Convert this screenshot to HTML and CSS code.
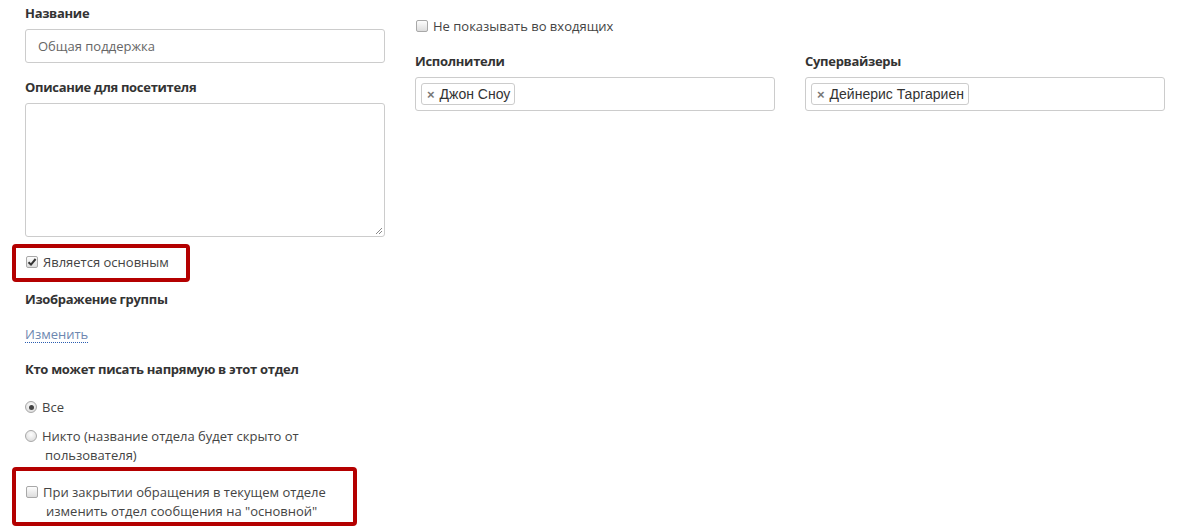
FILE: index.html
```html
<!DOCTYPE html>
<html lang="ru">
<head>
<meta charset="utf-8">
<link rel="stylesheet" href="styles.css">
</head>
<body>
<div class="page">
  <div class="col">
    <div class="label">Название</div>
    <div class="input"><span class="value">Общая поддержка</span></div>

    <div class="label label-gap">Описание для посетителя</div>
    <div class="textarea"><svg class="grip" width="8" height="8" viewBox="0 0 8 8"><path d="M7 1 L1 7 M7 4 L4 7" stroke="#888" stroke-width="1" fill="none"/></svg></div>

    <div class="highlight hl-first">
      <div class="check-row"><span class="cb checked"><svg width="10" height="10" viewBox="0 0 10 10"><path d="M1.5 5.2 L4 7.6 L8.6 2" stroke="#333" stroke-width="2" fill="none"/></svg></span><span>Является основным</span></div>
    </div>

    <div class="label label-img">Изображение группы</div>
    <div class="link-row"><a class="link">Изменить</a></div>

    <div class="label label-who">Кто может писать напрямую в этот отдел</div>
    <div class="radio-row first"><span class="rb on"></span><span>Все</span></div>
    <div class="radio-row"><span class="rb"></span><span>Никто (название отдела будет скрыто от<br><span class="indent">пользователя)</span></span></div>

    <div class="highlight hl-second">
      <div class="check-row two"><span class="cb"></span><span>При закрытии обращения в текущем отделе<br><span class="indent">изменить отдел сообщения на "основной"</span></span></div>
    </div>
  </div>

  <div class="col">
    <div class="check-row top"><span class="cb"></span><span>Не показывать во входящих</span></div>
    <div class="label label-right">Исполнители</div>
    <div class="input tags"><span class="tag"><span class="x">×</span>Джон Сноу</span></div>
  </div>

  <div class="col">
    <div class="check-row top"></div>
    <div class="label label-right">Супервайзеры</div>
    <div class="input tags"><span class="tag"><span class="x">×</span>Дейнерис Таргариен</span></div>
  </div>
</div>
</body>
</html>
```

FILE: styles.css
```css
html, body {
  margin: 0;
  padding: 0;
  background: #fff;
}
body {
  font-family: "Open Sans", "Liberation Sans", sans-serif;
  font-size: 13px;
  color: #333;
  overflow: hidden;
}
.page {
  display: grid;
  grid-template-columns: 360px 360px 360px;
  column-gap: 30px;
  padding: 4px 0 0 25px;
}
.col {
  display: flex;
  flex-direction: column;
  align-items: flex-start;
}
.label {
  font-weight: 700;
  font-size: 13px;
  letter-spacing: -0.3px;
  line-height: 18px;
  color: #333;
  margin-bottom: 7px;
}
.input {
  box-sizing: border-box;
  width: 360px;
  height: 34px;
  border: 1px solid #ccc;
  border-radius: 3px;
  padding: 0 12px;
  display: flex;
  align-items: center;
}
.value {
  color: #666;
  font-size: 13px;
}
.label-gap { margin-top: 15px; }
.textarea {
  box-sizing: border-box;
  width: 360px;
  height: 134px;
  border: 1px solid #ccc;
  border-radius: 3px;
  position: relative;
}
.grip {
  position: absolute;
  right: 1px;
  bottom: 1px;
}
.highlight {
  border: 4px solid #b40000;
  border-radius: 4px;
  margin-left: -13px;
  padding-left: 9px;
  box-sizing: border-box;
}
.hl-first {
  margin-top: 7px;
  width: 178px;
  height: 38px;
  padding-top: 5px;
}
.check-row {
  display: flex;
  align-items: flex-start;
  line-height: 18px;
  font-size: 13px;
  color: #444;
}
.cb {
  box-sizing: border-box;
  width: 12px;
  height: 12px;
  margin: 3px 5px 0 1px;
  border: 1px solid #a8a8a8;
  border-radius: 2px;
  background: linear-gradient(#fdfdfd, #dcdcdc);
  flex: none;
  display: flex;
  align-items: center;
  justify-content: center;
}
.cb svg { display: block; }
.label-img { margin-top: 8px; }
.link-row { margin-top: 10px; line-height: 18px; }
.link {
  color: #6d87b0;
  border-bottom: 1px dotted #2a5db0;
  text-decoration: none;
  line-height: 16px;
  display: inline-block;
}
.label-who { margin-top: 17px; }
.radio-row {
  display: flex;
  align-items: flex-start;
  line-height: 19px;
  color: #444;
  margin-top: 10px;
}
.radio-row.first { margin-top: 13px; }
.rb {
  box-sizing: border-box;
  width: 12px;
  height: 12px;
  border-radius: 50%;
  border: 1px solid #a8a8a8;
  background: radial-gradient(circle at 50% 35%, #fdfdfd, #d6d6d6);
  margin: 3px 5px 0 0;
  flex: none;
  position: relative;
}
.rb.on::after {
  content: "";
  position: absolute;
  left: 2.5px;
  top: 2.5px;
  width: 5px;
  height: 5px;
  border-radius: 50%;
  background: #444;
}
.indent { padding-left: 3px; }
.hl-second {
  margin-top: 2px;
  width: 345px;
  height: 59px;
  padding-top: 12px;
}
.check-row.two { line-height: 19px; }
.check-row.top { margin-top: 13px; height: 18px; }
.label-right { margin-top: 17px; margin-bottom: 7px; }
.tags { padding: 0 5px; }
.tag {
  font-family: "Liberation Sans", Arial, sans-serif;
  font-size: 14px;
  color: #333;
  border: 1px solid #ccc;
  border-radius: 3px;
  height: 22px;
  box-sizing: border-box;
  padding: 0 4px 0 5px;
  display: inline-flex;
  align-items: center;
  background: #fff;
}
.x {
  color: #777;
  font-weight: 700;
  font-size: 13px;
  margin-right: 5px;
}
```
